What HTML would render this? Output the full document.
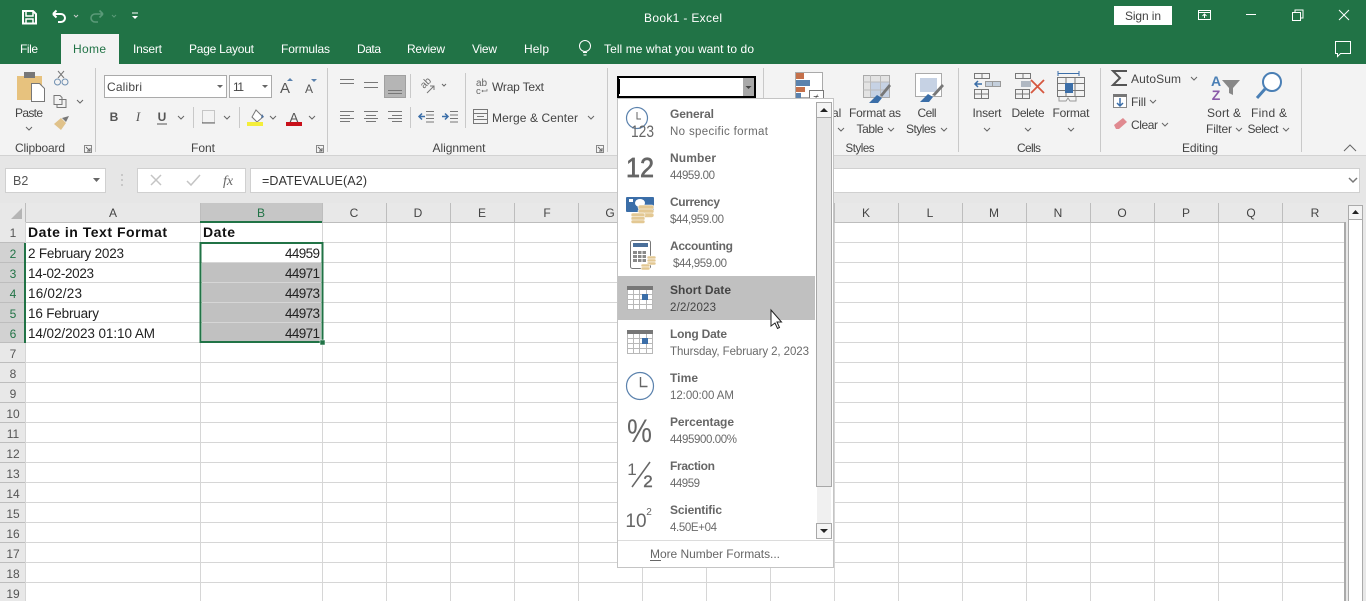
<!DOCTYPE html>
<html><head><meta charset="utf-8"><style>
html,body{margin:0;padding:0;background:#fff;overflow:hidden}
svg{display:block}
text{font-family:"Liberation Sans",sans-serif;font-size:12px;fill:#444}
.c{font-size:13.5px;fill:#222}
.h{font-size:12px;fill:#444;text-anchor:middle}
.r{font-size:12px;fill:#555;text-anchor:middle}
.b{font-weight:bold;font-size:12px;fill:#666}
.s{font-size:11.5px;fill:#6a6a6a}
.ch{fill:none;stroke:#666;stroke-width:1}
</style></head><body>
<svg width="1366" height="601" viewBox="0 0 1366 601" xmlns="http://www.w3.org/2000/svg">
<rect width="1366" height="601" fill="#fff"/>
<rect width="1366" height="64" fill="#217346"/>
<!-- title bar -->
<g fill="none" stroke="#fff" stroke-width="2">
<path d="M23 11h10l3 3v9.500H23z"/><path d="M26 11v5h7v-5M26 24v-5h7v5" stroke-width="1.500"/>
<path d="M53 14h8a4 4 0 0 1 0 8h-3M53 14l3.500-3.500M53 14l3.500 3.500"/>
</g>
<path d="M74 15l2 2 2-2" fill="none" stroke="#ccc"/>
<g fill="none" stroke="#5a9a78" stroke-width="1.6"><path d="M103 14h-8a4 4 0 0 0 0 8h3M103 14l-3.500-3.500M103 14l-3.500 3.500"/></g>
<path d="M112 15l2 2 2-2" fill="none" stroke="#5a9a78"/>
<path d="M132 13h6" stroke="#fff"/><path d="M132 16h6l-3 3z" fill="#fff"/>
<text x="683" y="22" text-anchor="middle" style="fill:#fff" textLength="78">Book1 - Excel</text>
<rect x="1114" y="6" width="58" height="19" fill="#fff"/>
<text x="1143" y="20" text-anchor="middle" style="fill:#444" textLength="36">Sign in</text>
<g fill="none" stroke="#fff">
<rect x="1198.500" y="10.500" width="12" height="9"/><path d="M1198 12.500h13M1204.500 18v-4M1202.500 16l2-2 2 2"/>
<path d="M1246 14.500h10"/>
<rect x="1292.500" y="12.500" width="8" height="8"/><path d="M1295 12v-2h8v8h-2"/>
<path d="M1339 10l10 10M1349 10l-10 10"/>
<path d="M1335.500 41.500h15v12h-10l-3 3v-3h-2z"/>
</g>
<!-- tabs -->
<rect x="61" y="34" width="58" height="30" fill="#f3f3f3"/>
<g>
<text x="20" y="53" style="fill:#fff" textLength="18">File</text>
<text x="73" y="53" style="fill:#217346" textLength="33">Home</text>
<text x="133" y="53" style="fill:#fff" textLength="29">Insert</text>
<text x="189" y="53" style="fill:#fff" textLength="65">Page Layout</text>
<text x="281" y="53" style="fill:#fff" textLength="49">Formulas</text>
<text x="357" y="53" style="fill:#fff" textLength="24">Data</text>
<text x="407" y="53" style="fill:#fff" textLength="38">Review</text>
<text x="472" y="53" style="fill:#fff" textLength="25">View</text>
<text x="524" y="53" style="fill:#fff" textLength="25">Help</text>
<text x="604" y="53" style="fill:#fff" textLength="150">Tell me what you want to do</text>
</g>
<g fill="none" stroke="#fff"><circle cx="585" cy="46" r="5.500"/><path d="M583 52.500h4M583.500 55h3"/></g>
<!-- ribbon -->
<rect y="64" width="1366" height="92" fill="#f3f3f3"/>
<rect y="156" width="1366" height="47" fill="#e6e6e6"/>
<rect y="155" width="1366" height="1" fill="#d2d2d2"/>
<g fill="#c9c9c9">
<rect x="95" y="68" width="1" height="84"/><rect x="327" y="68" width="1" height="84"/><rect x="607" y="68" width="1" height="84"/><rect x="763" y="68" width="1" height="84"/><rect x="958" y="68" width="1" height="84"/><rect x="1100" y="68" width="1" height="84"/><rect x="1301" y="68" width="1" height="84"/>
<rect x="193" y="107" width="1" height="21"/><rect x="239" y="107" width="1" height="21"/>
<rect x="410" y="74" width="1" height="24"/><rect x="410" y="107" width="1" height="21"/><rect x="465" y="73" width="1" height="55"/>
</g>
<!-- clipboard -->
<rect x="17" y="76" width="25" height="24" fill="#e7c27e"/><rect x="24" y="72" width="11" height="6" fill="#777"/>
<path d="M31.500 83.500h8l5 5v13h-13z" fill="#fff" stroke="#777"/>
<text x="29" y="117" text-anchor="middle" textLength="28">Paste</text>
<path d="M26 127l3 3 3-3M77 100l3 3 3-3" class="ch"/>
<g fill="none" stroke="#6f8fb0"><circle cx="57.500" cy="82" r="3"/><circle cx="65" cy="82" r="3"/></g><path d="M58 78l6-7M64 78l-6-7" stroke="#777"/>
<path d="M54 95.500h6l2 2v7h-8zM59 99.500h7v8h-9v-3" fill="none" stroke="#777"/>
<path d="M54 124l7-6 5 5-5 7z" fill="#e0c28a"/><path d="M62 118l7-2-3 6z" fill="#777"/>
<text x="40" y="152" text-anchor="middle" textLength="50">Clipboard</text>
<rect x="84.500" y="145.500" width="7" height="7" fill="none" stroke="#888"/><path d="M86 147l4 4M90 148v3h-3" fill="none" stroke="#666"/>
<!-- font -->
<rect x="104.500" y="75.500" width="122" height="22" fill="#fff" stroke="#aaa"/>
<rect x="229.500" y="75.500" width="42" height="22" fill="#fff" stroke="#aaa"/>
<text x="107" y="91" textLength="35">Calibri</text><text x="233" y="91" textLength="11">11</text>
<path d="M217 85h6l-3 3zM262 85h6l-3 3z" fill="#666"/>
<text x="285" y="93" text-anchor="middle" style="font-size:15px;fill:#555">A</text><text x="309" y="93" text-anchor="middle" style="font-size:12px;fill:#555">A</text>
<path d="M287 81h6l-3-3z" fill="#5b82ad"/><path d="M311 79h6l-3 3z" fill="#5b82ad"/>
<text x="114" y="121" text-anchor="middle" style="font-weight:bold;fill:#555">B</text>
<text x="138" y="121" text-anchor="middle" style="font-style:italic;fill:#555;font-family:'Liberation Serif',serif;font-size:13px">I</text>
<text x="162" y="121" text-anchor="middle" style="font-weight:bold;fill:#555">U</text><path d="M157 124h10" stroke="#555"/>
<path d="M178 116l3 3 3-3M224 116l3 3 3-3M270 116l3 3 3-3M309 116l3 3 3-3" class="ch"/>
<rect x="202.500" y="110.500" width="12" height="12" fill="none" stroke="#999" stroke-dasharray="1 1"/><path d="M202 123h13" stroke="#666"/>
<path d="M256 110l7 7-6 5-5-5z" fill="#fff" stroke="#777"/><path d="M262 114l2 3-3 1z" fill="#4a6fa0"/><rect x="247" y="122" width="16" height="4" fill="#f4ee3a"/>
<text x="294" y="122" text-anchor="middle" style="font-size:13px;fill:#555">A</text><rect x="286" y="122" width="16" height="4" fill="#c8101a"/>
<text x="203" y="152" text-anchor="middle" textLength="24">Font</text>
<rect x="316.500" y="145.500" width="7" height="7" fill="none" stroke="#888"/><path d="M318 147l4 4M322 148v3h-3" fill="none" stroke="#666"/>
<!-- alignment -->
<rect x="384.500" y="75.500" width="21" height="22" fill="#b5b5b5" stroke="#a0a0a0"/>
<g stroke="#777" fill="none">
<path d="M340 79.500h14M340 83.500h14M364 82.500h14M364 87.500h14M388 90.500h14M388 93.500h14"/>
<path d="M340 111.500h14M340 115.500h10M340 118.500h14M340 121.500h10M364 111.500h14M366 115.500h10M364 118.500h14M366 121.500h10M388 111.500h14M392 115.500h10M388 118.500h14M392 121.500h10"/>
<path d="M426 111.500h8M426 115h8M426 118.500h8M426 122h8M450 111.500h8M450 115h8M450 118.500h8M450 122h8"/>
<path d="M427 93l7-7M434 90v-4h-4"/>
</g>
<text x="424" y="89" transform="rotate(-45 424 89)" style="font-size:10px;fill:#666">ab</text>
<path d="M442 84l2 2 2-2" class="ch"/>
<path d="M425 116.500h-6M422 113.500l-3 3 3 3M442 116.500h6M445 113.500l3 3-3 3" fill="none" stroke="#3b6ea8" stroke-width="1.500"/>
<text x="476" y="86" style="font-size:10px;fill:#666">ab</text><text x="476" y="94" style="font-size:9.500px;fill:#666">c</text>
<path d="M487 89v2h-5M483 90l-1 1 1 1" fill="none" stroke="#777" stroke-width=".8"/>
<text x="492" y="91" textLength="52">Wrap Text</text>
<rect x="473.500" y="109.500" width="14" height="14" fill="none" stroke="#777"/><path d="M474 113.500h13M474 119.500h13M477 116.500h7" stroke="#777"/>
<text x="492" y="122" textLength="86">Merge &amp; Center</text>
<path d="M588 116l3 3 3-3" class="ch"/>
<text x="459" y="152" text-anchor="middle" textLength="53">Alignment</text>
<rect x="596.500" y="145.500" width="7" height="7" fill="none" stroke="#888"/><path d="M598 147l4 4M602 148v3h-3" fill="none" stroke="#666"/>
<!-- combo -->
<rect x="617" y="76" width="139" height="22" fill="#000"/><rect x="619" y="78" width="124" height="18" fill="#fff"/><rect x="743" y="78" width="11" height="18" fill="#a8a8a8"/>
<path d="M745.500 86h6l-3 3z" fill="#444"/><rect x="619" y="79" width="1" height="15" fill="#000"/>
<!-- styles -->
<g fill="none">
<rect x="795.500" y="72.500" width="27" height="25" stroke="#aaa" fill="#fff"/>
<rect x="796" y="73" width="8" height="6" fill="#c5704a"/><rect x="796" y="80" width="14" height="6" fill="#5b82ad"/><rect x="796" y="87" width="9" height="5" fill="#c5704a"/><rect x="796" y="93" width="5" height="5" fill="#5b82ad"/>
<rect x="809.500" y="90.500" width="14" height="12" fill="#fff" stroke="#777"/>
</g>
<text x="816" y="101" text-anchor="middle" style="font-size:10px;fill:#444">≠</text>
<rect x="863.500" y="75.500" width="26" height="22" fill="#e3e3e3" stroke="#aaa"/><rect x="871" y="82" width="18" height="15" fill="#c6d2e4"/>
<path d="M870.500 75v22M880.500 75v22M863 82h26M863 90h26" stroke="#bbb"/>
<path d="M869 103l8-8 5 3-4 5z" fill="#3b6ea8"/><path d="M880 95l9-11 2 2-9 11z" fill="#777"/>
<rect x="915.500" y="73.500" width="26" height="23" fill="#fff" stroke="#aaa"/><rect x="920" y="78" width="17" height="14" fill="#c6d2e4"/>
<path d="M920 102l8-8 5 3-4 5z" fill="#3b6ea8"/><path d="M932 95l10-11 2 2-9 10z" fill="#777"/>
<text x="832" y="117" style="fill:#444">al</text>
<text x="875" y="117" text-anchor="middle" textLength="52">Format as</text>
<text x="870" y="133" text-anchor="middle" textLength="27">Table</text>
<text x="927" y="117" text-anchor="middle" textLength="19">Cell</text>
<text x="921" y="133" text-anchor="middle" textLength="30">Styles</text>
<path d="M838 128l3 3 3-3M888 128l3 3 3-3M941 128l3 3 3-3" class="ch"/>
<text x="860" y="152" text-anchor="middle" textLength="29" style="font-size:11.5px">Styles</text>
<!-- cells -->
<g fill="none" stroke="#777">
<path d="M974.500 73.500h15v5h-15zM982 73v5M974.500 89.500h14v9h-14zM981.500 89v9M974 94h14"/>
<path d="M1015.500 73.500h15v5h-15zM1023 73v5M1015.500 89.500h14v9h-14zM1022.500 89v9M1015 94h14"/>
<path d="M1057.500 77.500h27v19h-27zM1066 77v19M1075 77v19M1057 83.500h27M1057 90.500h27"/>
<path d="M1059 97v4h7l2-3 2 3h6v-4" stroke="#999"/>
</g>
<rect x="985.500" y="81.500" width="15" height="5" fill="#c4cfdc" stroke="#999"/><path d="M992.500 81v5" stroke="#999"/>
<path d="M975 84h7M978 81l-3 3 3 3" fill="none" stroke="#3b6ea8" stroke-width="1.500"/>
<rect x="1021" y="81" width="10" height="6" fill="#b0b8c2"/><path d="M1031 80l13 13M1044 80l-13 13" stroke="#d6573f" stroke-width="1.800"/>
<rect x="1065" y="83" width="8" height="10" fill="#3b6ea8"/><path d="M1058 73.500h21M1058 71v5M1079 71v5" stroke="#3b6ea8" fill="none"/>
<text x="987" y="117" text-anchor="middle" textLength="29">Insert</text>
<text x="1028" y="117" text-anchor="middle" textLength="33">Delete</text>
<text x="1071" y="117" text-anchor="middle" textLength="37">Format</text>
<path d="M984 128l3 3 3-3M1025 128l3 3 3-3M1068 128l3 3 3-3" class="ch"/>
<text x="1029" y="152" text-anchor="middle" textLength="24">Cells</text>
<!-- editing -->
<path d="M1127 71h-14l7 7-7 7h14" fill="none" stroke="#555" stroke-width="2"/>
<text x="1131" y="83" textLength="50">AutoSum</text><path d="M1191 77l3 3 3-3" class="ch"/>
<rect x="1113.500" y="94.500" width="13" height="13" fill="#fff" stroke="#888"/><rect x="1113" y="94" width="14" height="3" fill="#777"/><path d="M1120 98v8M1117 103l3 3 3-3" fill="none" stroke="#3b6ea8" stroke-width="1.500"/>
<text x="1131" y="106" textLength="15">Fill</text><path d="M1150 100l3 3 3-3" class="ch"/>
<path d="M1114 125l9-7 4 4-8 7h-3z" fill="#e08a90"/>
<text x="1131" y="129" textLength="27">Clear</text><path d="M1162 123l3 3 3-3" class="ch"/>
<text x="1216" y="86" text-anchor="middle" style="font-size:14px;font-weight:bold;fill:#4a7fb5">A</text><text x="1216" y="100" text-anchor="middle" style="font-size:14px;font-weight:bold;fill:#8a5aa8">Z</text>
<path d="M1222 80h18l-7 8v7l-4-2v-5z" fill="#888"/>
<circle cx="1272" cy="82" r="9" fill="#fff" stroke="#4a7fb5" stroke-width="2"/><path d="M1265 89l-8 9" stroke="#4a7fb5" stroke-width="3"/>
<text x="1224" y="117" text-anchor="middle" textLength="34">Sort &amp;</text>
<text x="1219" y="133" text-anchor="middle" textLength="26">Filter</text>
<text x="1269" y="117" text-anchor="middle" textLength="36">Find &amp;</text>
<text x="1263" y="133" text-anchor="middle" textLength="31">Select</text>
<path d="M1236 128l3 3 3-3M1283 128l3 3 3-3" class="ch"/>
<text x="1200" y="152" text-anchor="middle" textLength="36">Editing</text>
<path d="M1344 151l6-6 6 6" fill="none" stroke="#666"/>
<!-- formula bar -->
<rect x="5.500" y="168.500" width="100" height="24" fill="#fff" stroke="#d0d0d0"/>
<text x="13" y="185" style="font-size:12.500px;fill:#555">B2</text><path d="M93 178h7l-3.500 4z" fill="#666"/>
<path d="M122 174v2M122 179v2M122 184v2" stroke="#aaa"/>
<rect x="137.500" y="168.500" width="108" height="24" fill="#fff" stroke="#d0d0d0"/>
<path d="M151 175l10 10M161 175l-10 10" stroke="#c4c4c4" stroke-width="1.500"/><path d="M187 181l4 4 9-10" fill="none" stroke="#c4c4c4" stroke-width="1.500"/>
<text x="228" y="185" text-anchor="middle" style="font-family:'Liberation Serif',serif;font-style:italic;font-size:14px;fill:#666">fx</text>
<rect x="250.500" y="168.500" width="1109" height="24" fill="#fff" stroke="#d0d0d0"/>
<text x="262" y="185" style="font-size:12.500px;fill:#333" textLength="105">=DATEVALUE(A2)</text>
<path d="M1349 178l4 4 4-4" fill="none" stroke="#777" stroke-width="1.500"/>
<!-- headers -->
<rect x="0" y="203" width="1366" height="398" fill="#e8e8e8"/>
<rect x="26" y="223" width="1318" height="378" fill="#fff"/>
<rect x="200" y="203" width="122" height="19" fill="#c6c6c6"/>
<rect x="0" y="243" width="25" height="100" fill="#d2d2d2"/>
<path d="M22 208v11H11z" fill="#b5b5b5"/>
<!-- gridlines -->
<g stroke="#d6d6d6">
<path d="M25.500 222v379M200.500 222v379M322.500 222v379M386.500 222v379M450.500 222v379M514.500 222v379M578.500 222v379M642.500 222v379M706.500 222v379M770.500 222v379M834.500 222v379M898.500 222v379M962.500 222v379M1026.500 222v379M1090.500 222v379M1154.500 222v379M1218.500 222v379M1282.500 222v379"/>
<path d="M0 242.500h1344M0 262.500h1344M0 282.500h1344M0 302.500h1344M0 322.500h1344M0 342.500h1344M0 362.500h1344M0 382.500h1344M0 402.500h1344M0 422.500h1344M0 442.500h1344M0 462.500h1344M0 482.500h1344M0 502.500h1344M0 522.500h1344M0 542.500h1344M0 562.500h1344M0 582.500h1344"/>
</g>
<g stroke="#bdbdbd"><path d="M25.500 203v19M200.500 203v19M322.500 203v19M386.500 203v19M450.500 203v19M514.500 203v19M578.500 203v19M642.500 203v19M834.500 203v19M898.500 203v19M962.500 203v19M1026.500 203v19M1090.500 203v19M1154.500 203v19M1218.500 203v19M1282.500 203v19"/><path d="M26 222.500h1319M0 242.500h25M0 262.500h25M0 282.500h25M0 302.500h25M0 322.500h25M0 342.500h25M0 362.500h25M0 382.500h25M0 402.500h25M0 422.500h25M0 442.500h25M0 462.500h25M0 482.500h25M0 502.500h25M0 522.500h25M0 542.500h25M0 562.500h25M0 582.500h25"/></g>
<rect x="1344" y="222" width="2" height="379" fill="#aaa"/>
<rect x="200" y="221" width="122" height="2" fill="#217346"/>
<rect x="24" y="243" width="2" height="100" fill="#217346"/>
<g>
<text class="h" x="113" y="217">A</text><text class="h" x="261" y="217" style="fill:#217346">B</text><text class="h" x="354" y="217">C</text><text class="h" x="418" y="217">D</text><text class="h" x="482" y="217">E</text><text class="h" x="547" y="217">F</text><text class="h" x="610" y="217">G</text>
<text class="h" x="866" y="217">K</text><text class="h" x="930" y="217">L</text><text class="h" x="994" y="217">M</text><text class="h" x="1058" y="217">N</text><text class="h" x="1122" y="217">O</text><text class="h" x="1186" y="217">P</text><text class="h" x="1251" y="217">Q</text><text class="h" x="1315" y="217">R</text>
</g>
<g>
<text class="r" x="13" y="237">1</text>
<text class="r" x="13" y="258" style="fill:#217346">2</text><text class="r" x="13" y="278" style="fill:#217346">3</text><text class="r" x="13" y="298" style="fill:#217346">4</text><text class="r" x="13" y="318" style="fill:#217346">5</text><text class="r" x="13" y="338" style="fill:#217346">6</text>
<text class="r" x="13" y="358">7</text><text class="r" x="13" y="378">8</text><text class="r" x="13" y="398">9</text><text class="r" x="13" y="418">10</text><text class="r" x="13" y="438">11</text><text class="r" x="13" y="458">12</text><text class="r" x="13" y="478">13</text><text class="r" x="13" y="498">14</text><text class="r" x="13" y="518">15</text><text class="r" x="13" y="538">16</text><text class="r" x="13" y="558">17</text><text class="r" x="13" y="578">18</text><text class="r" x="13" y="598">19</text>
</g>
<!-- cells -->
<rect x="202" y="263" width="119" height="78" fill="#c1c1c1"/>
<path d="M202 282.500h119M202 302.500h119M202 322.500h119" stroke="#d6d6d6"/>
<rect x="200.500" y="243" width="122" height="99" fill="none" stroke="#217346" stroke-width="2"/>
<rect x="320" y="340" width="5" height="5" fill="#217346" stroke="#fff" stroke-width="0.500"/>
<text x="28" y="237" style="font-size:14px;font-weight:bold;fill:#111" textLength="139">Date in Text Format</text>
<text x="203" y="237" style="font-size:14px;font-weight:bold;fill:#111" textLength="32">Date</text>
<text class="c" x="28" y="258" textLength="96">2 February 2023</text>
<text class="c" x="28" y="278" textLength="66">14-02-2023</text>
<text class="c" x="28" y="298" textLength="54">16/02/23</text>
<text class="c" x="28" y="318" textLength="71">16 February</text>
<text class="c" x="28" y="338" textLength="127">14/02/2023 01:10 AM</text>
<text class="c" x="285" y="258" textLength="35">44959</text><text class="c" x="285" y="278" textLength="35">44971</text><text class="c" x="285" y="298" textLength="35">44973</text><text class="c" x="285" y="318" textLength="35">44973</text><text class="c" x="285" y="338" textLength="35">44971</text>
<!-- right scrollbar -->
<rect x="1348.500" y="205.500" width="14" height="396" fill="#fff" stroke="#aaa"/>
<rect x="1348.500" y="205.500" width="14" height="14" fill="#f3f3f3" stroke="#aaa"/><path d="M1352 214h7l-3.500-4z" fill="#222"/>
<!-- dropdown -->
<rect x="617.500" y="98.500" width="216" height="469" fill="#fff" stroke="#c4c4c4"/>
<rect x="618" y="276" width="197" height="44" fill="#c0c0c0"/>
<rect x="817" y="103" width="14" height="435" fill="#f0f0f0"/>
<rect x="816.500" y="117.500" width="15" height="369" fill="#e6e6e6" stroke="#a8a8a8"/>
<rect x="816.500" y="102.500" width="15" height="15" fill="#f5f5f5" stroke="#a8a8a8"/><path d="M820 112h8l-4-4z" fill="#222"/>
<rect x="816.500" y="523.500" width="15" height="15" fill="#f5f5f5" stroke="#a8a8a8"/><path d="M820 529h8l-4 4z" fill="#222"/>
<path d="M618 540.500h215" stroke="#dcdcdc"/>
<text x="670" y="118" class="b" textLength="44">General</text><text x="670" y="135" class="s" textLength="98">No specific format</text>
<text x="670" y="162" class="b" textLength="46">Number</text><text x="670" y="179" class="s" textLength="45">44959.00</text>
<text x="670" y="206" class="b" textLength="50">Currency</text><text x="670" y="223" class="s" textLength="54">$44,959.00</text>
<text x="670" y="250" class="b" textLength="63">Accounting</text><text x="673" y="267" class="s" textLength="54">$44,959.00</text>
<text x="670" y="294" class="b" style="fill:#444" textLength="61">Short Date</text><text x="670" y="311" class="s" style="fill:#444" textLength="46">2/2/2023</text>
<text x="670" y="338" class="b" textLength="57">Long Date</text><text x="670" y="355" class="s" textLength="139">Thursday, February 2, 2023</text>
<text x="670" y="382" class="b" textLength="28">Time</text><text x="670" y="399" class="s" textLength="64">12:00:00 AM</text>
<text x="670" y="426" class="b" textLength="64">Percentage</text><text x="670" y="443" class="s" textLength="67">4495900.00%</text>
<text x="670" y="470" class="b" textLength="45">Fraction</text><text x="670" y="487" class="s" textLength="30">44959</text>
<text x="670" y="514" class="b" textLength="52">Scientific</text><text x="670" y="531" class="s" textLength="47">4.50E+04</text>
<text x="650" y="558" style="font-size:12px;fill:#666" textLength="130">More Number Formats...</text><path d="M650 560.500h11" stroke="#666"/>
<!-- icons -->
<circle cx="637" cy="118" r="10.500" fill="#fff" stroke="#5b82ad" stroke-width="1.200"/><path d="M637 112v7h4" fill="none" stroke="#666"/>
<text x="642.500" y="137" text-anchor="middle" style="font-size:17px;fill:#666" textLength="23" lengthAdjust="spacingAndGlyphs">123</text>
<text x="640" y="177" text-anchor="middle" style="font-size:28px;fill:#666;stroke:#666;stroke-width:.7" textLength="28" lengthAdjust="spacingAndGlyphs">12</text>
<rect x="626" y="197" width="28" height="15" rx="1" fill="#3b6ea8"/><ellipse cx="640" cy="203" rx="5" ry="4" fill="#fff"/><rect x="629" y="199" width="4" height="3" fill="#fff"/>
<g fill="#e3c893" stroke="#fff" stroke-width=".6"><rect x="638" y="205" width="16" height="4.500" rx="2.200"/><rect x="638" y="209" width="16" height="4.500" rx="2.200"/><rect x="638" y="213" width="16" height="4.500" rx="2.200"/><rect x="631" y="213" width="14" height="4" rx="2"/><rect x="631" y="216.500" width="14" height="4" rx="2"/><rect x="631" y="220" width="14" height="3.500" rx="1.700"/></g>
<rect x="630.500" y="240.500" width="20" height="28" rx="2" fill="#fff" stroke="#777"/><rect x="633" y="243" width="15" height="4" fill="#4a6f9a"/>
<path d="M633 251h13v11h-13z" fill="#8a8a8a"/><path d="M637.500 251v11M642 251v11M633 254.500h13M633 258.500h13" stroke="#fff"/>
<g fill="#e3c893" stroke="#fff" stroke-width=".5"><rect x="647" y="256" width="9" height="3" rx="1.500"/><rect x="647" y="259" width="9" height="3" rx="1.500"/><rect x="647" y="262" width="9" height="3" rx="1.500"/><rect x="641" y="264" width="9" height="3" rx="1.500"/><rect x="641" y="267" width="9" height="3" rx="1.500"/></g>
<!-- calendars -->
<g>
<rect x="627" y="286" width="26" height="24" fill="#fff"/>
<path d="M627.500 290v20M633.500 290v20M639.500 290v20M646.500 290v20M652.500 290v20M627 294.500h26M627 299.500h26M627 304.500h26M627 309.500h26" stroke="#b8b8b8"/>
<rect x="627" y="286" width="26" height="4" fill="#777"/>
<rect x="642" y="294" width="6" height="6" fill="#3b6ea8"/>
<rect x="627" y="330" width="26" height="24" fill="#fff"/>
<path d="M627.500 334v20M633.500 334v20M639.500 334v20M646.500 334v20M652.500 334v20M627 338.500h26M627 343.500h26M627 348.500h26M627 353.500h26" stroke="#b8b8b8"/>
<rect x="627" y="330" width="26" height="4" fill="#777"/>
<rect x="642" y="338" width="6" height="6" fill="#3b6ea8"/>
</g>
<circle cx="640" cy="386" r="13.500" fill="#fff" stroke="#5b82ad" stroke-width="1.200"/><path d="M640.500 377v9.500h7" fill="none" stroke="#666" stroke-width="1.400"/>
<text x="639.500" y="442" text-anchor="middle" style="font-size:32px;fill:#666" textLength="25" lengthAdjust="spacingAndGlyphs">%</text>
<text x="632" y="475" text-anchor="middle" style="font-size:17px;fill:#666">1</text><path d="M650 462l-18 25" stroke="#666" stroke-width="1.500"/><text x="648" y="487" text-anchor="middle" style="font-size:17px;fill:#666;stroke:#666;stroke-width:.4">2</text>
<text x="636" y="527" text-anchor="middle" style="font-size:19px;fill:#666">10</text><text x="649" y="515" text-anchor="middle" style="font-size:10px;fill:#666">2</text>
<!-- cursor -->
<path d="M771 310v16l4-3 2.500 5.500 2-1-2.500-5.500h4.500z" fill="#fff" stroke="#222" stroke-width="1"/>
</svg>
</body></html>
